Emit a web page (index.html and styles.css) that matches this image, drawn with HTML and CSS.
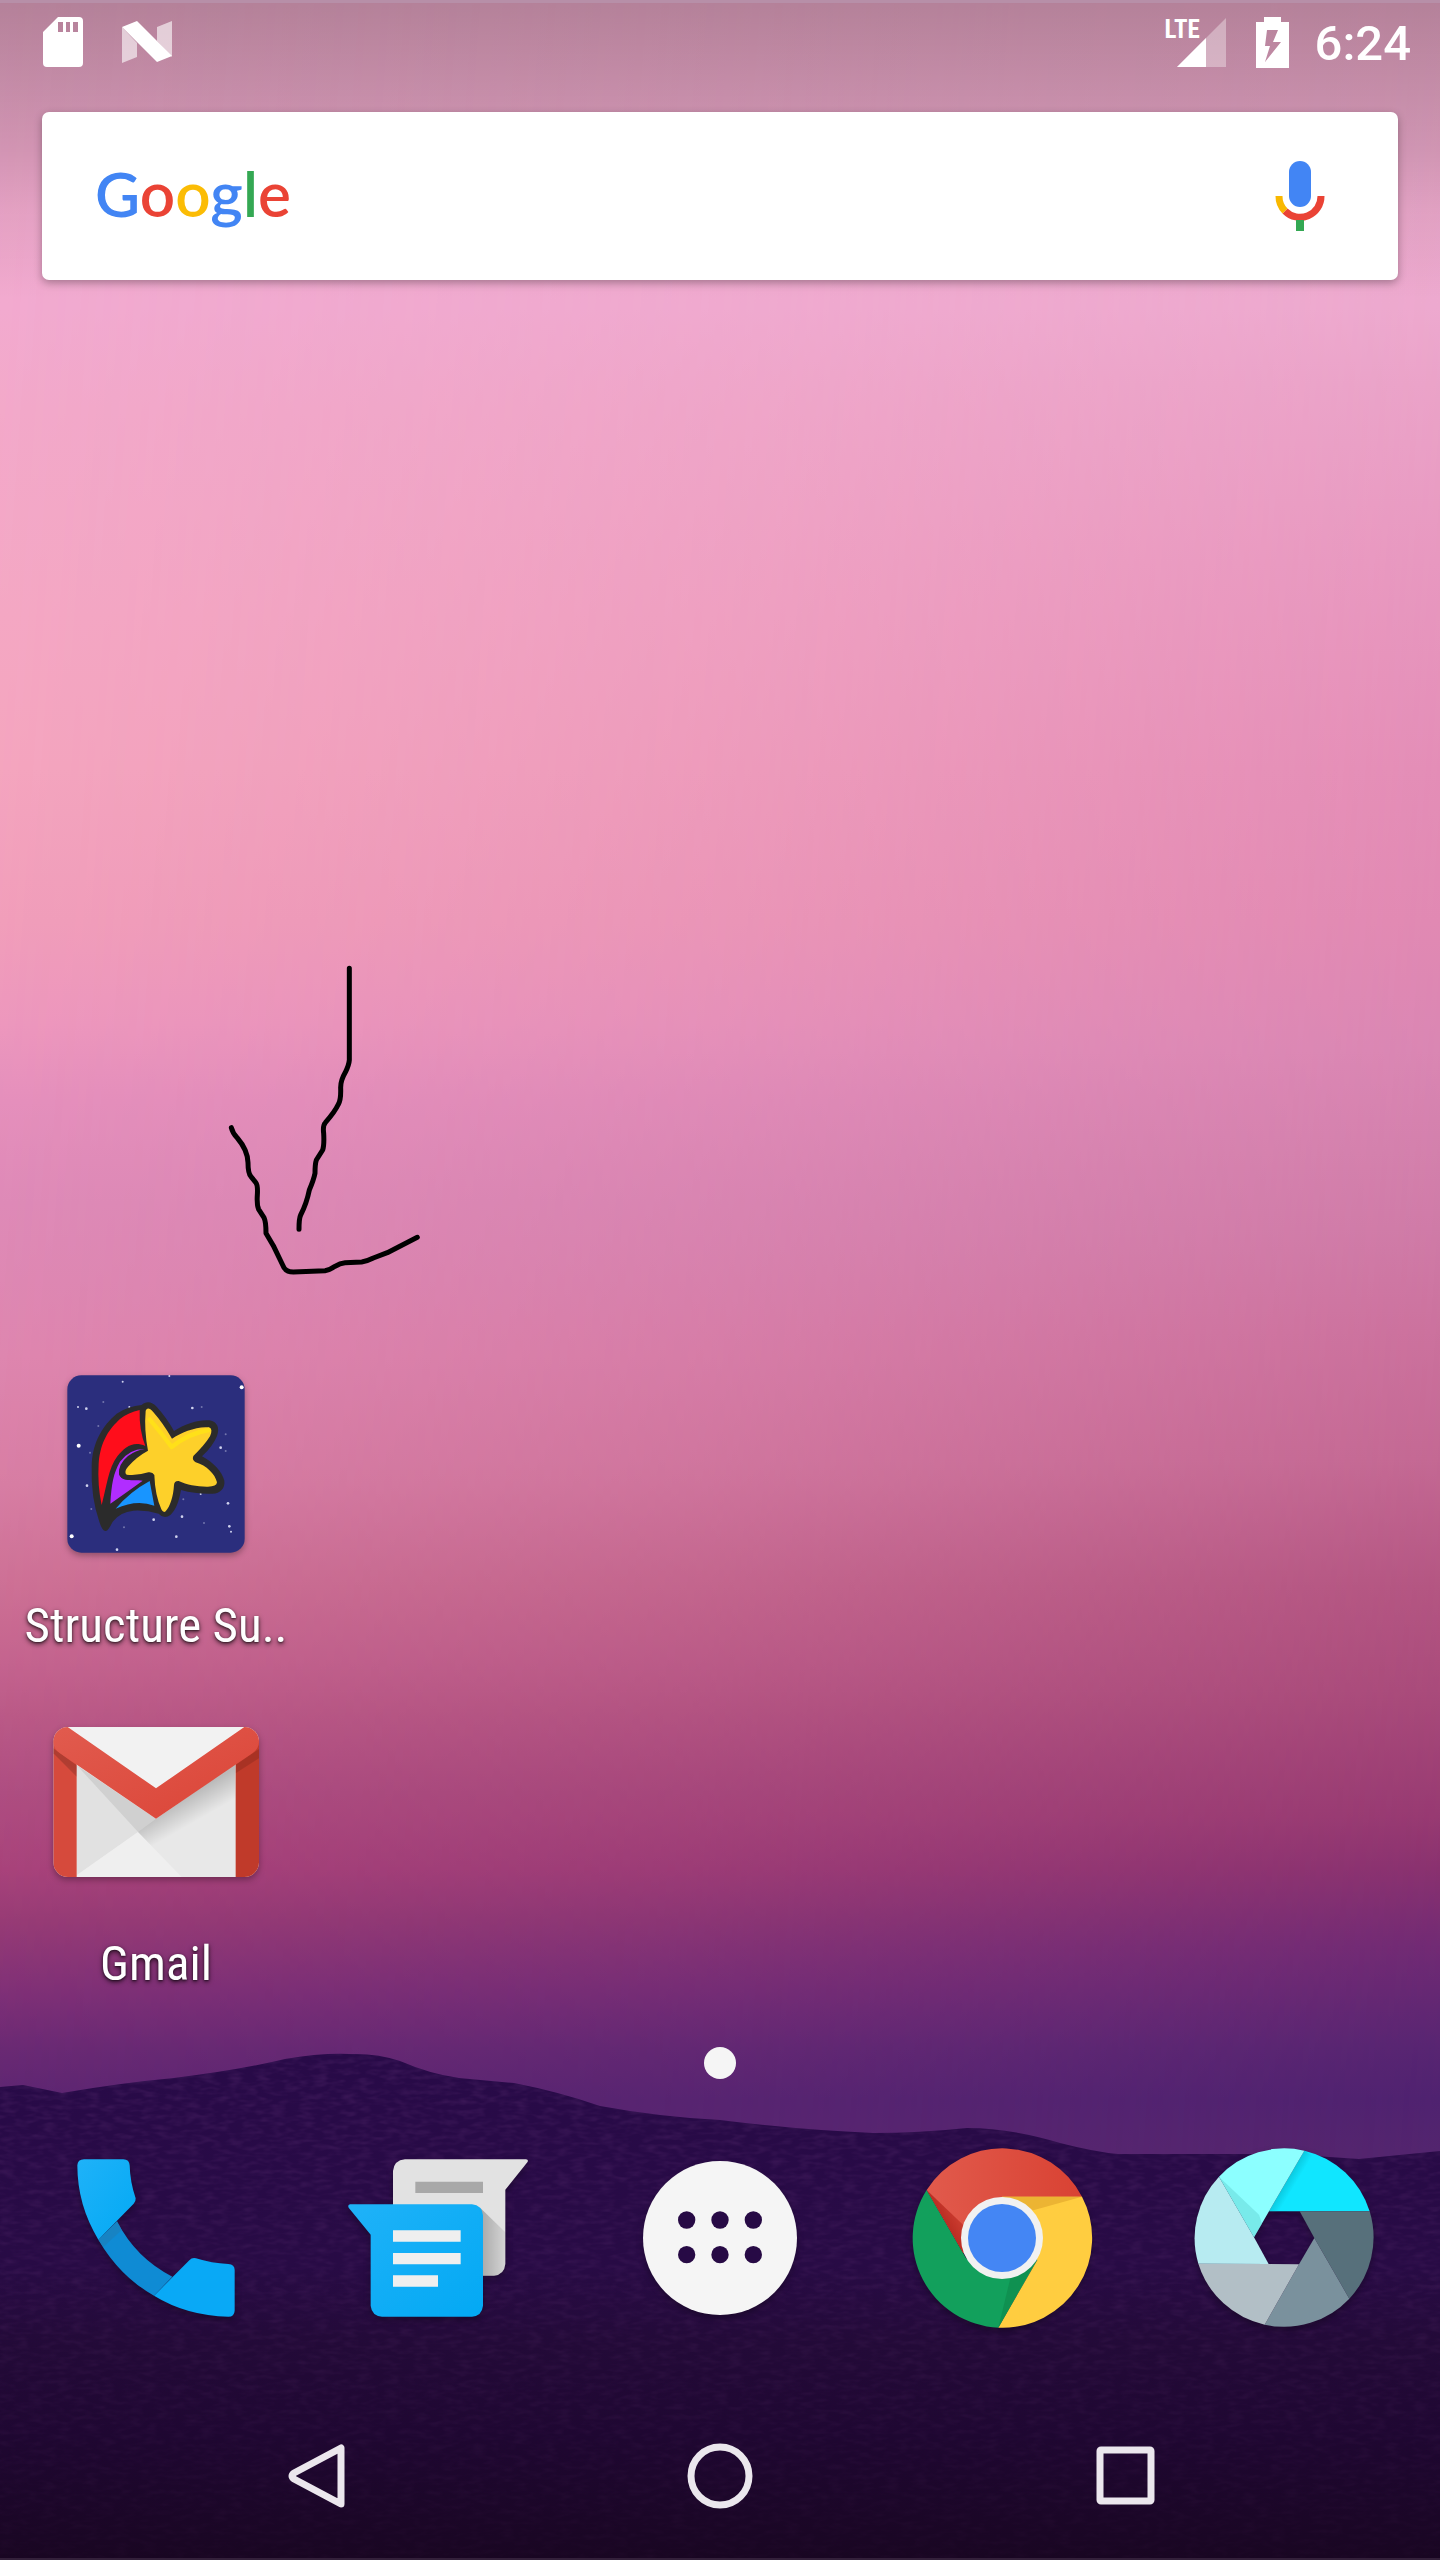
FILE: index.html
```html
<!DOCTYPE html>
<html lang="en">
<head>
<meta charset="utf-8">
<meta name="viewport" content="width=device-width, initial-scale=1">
<title>Home screen</title>
<link rel="stylesheet" href="styles.css">
</head>
<body>
<main class="screen">
  <div class="sky"></div>
  <div class="sky sky-right"></div>
  <svg class="hills" viewBox="0 0 1440 2560" preserveAspectRatio="none" aria-hidden="true">
    <defs>
      <linearGradient id="hill" x1="0" y1="2050" x2="0" y2="2560" gradientUnits="userSpaceOnUse">
        <stop offset="0" stop-color="#280a48"/>
        <stop offset=".42" stop-color="#280b45"/>
        <stop offset=".58" stop-color="#230a38"/>
        <stop offset=".75" stop-color="#1f0732"/>
        <stop offset="1" stop-color="#190622"/>
      </linearGradient>
      <filter id="grain" x="0" y="0" width="100%" height="100%">
        <feTurbulence type="fractalNoise" baseFrequency=".07 .2" numOctaves="2" seed="4"/>
        <feColorMatrix values="0 0 0 0 .38  0 0 0 0 .12  0 0 0 0 .42  1.6 0 0 0 -.65"/>
        <feComposite in2="SourceGraphic" operator="in"/>
      </filter>
      <linearGradient id="fade" x1="0" y1="2050" x2="0" y2="2560" gradientUnits="userSpaceOnUse">
        <stop offset="0" stop-color="#fff"/>
        <stop offset="1" stop-color="#fff" stop-opacity=".2"/>
      </linearGradient>
      <path id="ridge" d="M0 2087L23 2085L62 2093Q120 2083 174 2078Q240 2070 285 2059Q320 2053 349 2054Q377 2053 400 2061Q430 2074 459 2078L514 2083Q560 2092 600 2106Q660 2117 720 2120Q800 2130 873 2133Q920 2133 967 2128Q1010 2128 1060 2143Q1095 2152 1118 2154H1240Q1300 2154 1359 2159L1440 2151V2560H0Z"/>
    </defs>
    <use href="#ridge" fill="url(#hill)"/>
    <use href="#ridge" fill="url(#fade)" filter="url(#grain)" opacity=".2"/>
    <path fill="#33203a" d="M0 2558H1440V2560H0Z"/>
  </svg>
  <div class="scrim"></div>

  <header class="status">
    <div class="status-group notices">
      <svg class="sd" viewBox="0 0 40 50" role="img" aria-label="SD card"><path fill="#fff" fill-rule="evenodd" d="M15 0H36Q40 0 40 4V46Q40 50 36 50H4Q0 50 0 46V15ZM15 5V15H20V5ZM23 5V15H27V5ZM30 5V15H35V5Z"/></svg>
      <svg class="nougat" viewBox="0 0 50 42" role="img" aria-label="Android update"><path fill="#fff" opacity=".6" d="M0 6L15 22V36L0 42ZM35 6L50 0V36L35 20Z"/><path fill="#fff" d="M0 6L15 0L50 35L35 41Z"/></svg>
    </div>
    <div class="status-group system">
      <div class="signal">
        <span class="lte">LTE</span>
        <svg class="bars" viewBox="0 0 49 49" role="img" aria-label="Signal strength"><path fill="#fff" opacity=".35" d="M0 49L49 0V49Z"/><path fill="#fff" d="M0 49L29 20V49Z"/></svg>
      </div>
      <svg class="battery" viewBox="0 0 33 51" role="img" aria-label="Battery charging"><path fill="#fff" fill-rule="evenodd" d="M8 0H25V5H33V51H0V5H8ZM11 13L9 29H14L9 45L25 25H17L22 13Z"/></svg>
      <time class="clock">6:24</time>
    </div>
  </header>

  <form class="search">
    <label class="logo" for="q"><span class="b">G</span><span class="r">o</span><span class="y">o</span><span class="b">g</span><span class="g">l</span><span class="r">e</span></label>
    <input class="query" id="q" type="text">
    <button class="mic" type="button" aria-label="Voice search">
      <svg viewBox="0 0 50 70" aria-hidden="true"><rect x="14" y="0" width="22" height="46" rx="11" fill="#4285f4"/><path fill="none" stroke="#ea4335" stroke-width="7" d="M10 50A21 21 0 0 0 46 35"/><path fill="none" stroke="#f9b800" stroke-width="7" d="M4 35A21 21 0 0 0 10 50"/><path fill="#34a853" d="M21 59H29V70H21Z"/></svg>
    </button>
  </form>

  <section class="apps">
    <a class="app" href="#structure">
      <svg class="icon" viewBox="156 30 624 624" aria-hidden="true">
        <rect x="202" y="76" width="532" height="532" rx="42" fill="#2b2e7d"/>
        <g fill="#cfd2ee"><circle cx="725" cy="112" r="6" fill="#fff"/><circle cx="236" cy="287" r="6" fill="#fff"/><circle cx="215" cy="559" r="6" fill="#fff"/><circle cx="368" cy="95" r="3"/><circle cx="508" cy="78" r="3"/><circle cx="259" cy="176" r="4"/><circle cx="234" cy="171" r="3"/><circle cx="388" cy="171" r="3"/><circle cx="577" cy="174" r="4"/><circle cx="662" cy="293" r="4"/><circle cx="261" cy="407" r="4"/><circle cx="684" cy="460" r="4"/><circle cx="546" cy="500" r="4"/><circle cx="461" cy="509" r="4"/><circle cx="529" cy="560" r="4"/><circle cx="688" cy="529" r="4"/><circle cx="693" cy="545" r="3"/><circle cx="351" cy="599" r="4"/><circle cx="602" cy="432" r="3"/></g>
        <g fill="#7275ac"><circle cx="310" cy="156" r="3"/><circle cx="605" cy="171" r="3"/><circle cx="677" cy="253" r="3"/><circle cx="677" cy="303" r="3"/><circle cx="295" cy="228" r="3"/><circle cx="270" cy="308" r="3"/><circle cx="274" cy="477" r="3"/><circle cx="372" cy="532" r="3"/><circle cx="612" cy="519" r="3"/><circle cx="550" cy="448" r="3"/></g>
        <path fill="#2b2b2b" d="M425 165C438 152 456 154 470 170Q500 203 522 243C560 218 600 208 628 211C652 214 660 235 651 258Q638 290 606 319C640 337 666 365 673 392C676 415 660 430 638 431Q590 433 543 420C537 455 527 480 512 494Q493 510 476 491Q440 480 400 482Q360 486 338 515Q325 542 317 543Q306 542 298 515Q272 440 275 350C276 275 310 225 350 191Q385 168 425 165Z"/>
        <path fill="#ff0d1b" d="M419 180Q417 240 436 288C400 272 375 290 352 319C325 355 320 410 305 465Q292 405 296 340C302 270 330 235 360 207Q385 187 419 180Z"/>
        <path fill="#b12dff" d="M436 297Q408 300 384 318Q355 342 357 372C366 397 395 388 428 392Q395 416 331 461C335 400 340 370 360 335Q390 295 436 297Z"/>
        <path fill="none" stroke="#2b2b2b" stroke-width="14" stroke-linecap="round" d="M436 304Q400 318 380 340Q355 365 369 378Q385 388 455 374"/>
        <path fill="#1895ff" d="M449 393L463 467Q410 447 347 476Q390 425 449 393Z"/>
        <path fill="#fdd02a" d="M437 182Q443 167 459 185Q490 220 516 266C545 247 590 228 627 232Q640 237 630 259Q614 285 580 318Q575 330 587 337C620 347 645 372 651 397Q650 411 620 410C590 410 560 404 536 393Q523 392 522 405C520 440 510 470 497 484Q490 490 484 478Q465 435 463 375Q458 365 445 367Q410 378 380 374Q370 366 384 350Q410 320 444 302Q432 240 437 182Z"/>
        <path fill="none" stroke="#ffe019" stroke-width="13" stroke-linejoin="round" stroke-linecap="round" d="M449 208Q485 250 515 291Q565 250 626 240"/>
      </svg>
      <span class="label">Structure Su..</span>
    </a>
    <a class="app" href="#gmail">
      <svg class="icon" viewBox="156 24 624 624" aria-hidden="true">
        <defs>
          <clipPath id="env"><rect x="160" y="111" width="617" height="450" rx="44"/></clipPath>
          <linearGradient id="fold" x1="0" y1="0" x2="1" y2="1"><stop offset="0" stop-color="#e15b4e"/><stop offset="1" stop-color="#db4437"/></linearGradient>
          <linearGradient id="under" x1="340" y1="300" x2="300" y2="370" gradientUnits="userSpaceOnUse"><stop offset="0" stop-color="#000" stop-opacity=".18"/><stop offset="1" stop-color="#000" stop-opacity="0"/></linearGradient>
          <linearGradient id="under2" x1="590" y1="300" x2="630" y2="370" gradientUnits="userSpaceOnUse"><stop offset="0" stop-color="#000" stop-opacity=".2"/><stop offset="1" stop-color="#000" stop-opacity="0"/></linearGradient>
        </defs>
        <g clip-path="url(#env)">
          <rect x="160" y="111" width="617" height="450" fill="#e8e8e8"/>
          <path fill="#e1e1e1" d="M230 226L414 426L230 556Z"/>
          <path fill="#d0d0d0" d="M230 226L468 386L414 426Z"/>
          <path fill="#efefef" d="M414 426L545 561H230V556Z"/>
          <path fill="url(#under2)" d="M414 426L468 386L706 222V330L540 555Z"/>
          <path fill="#d64a3c" d="M160 150L230 200V561H160Z"/>
          <path fill="#c03a2a" d="M777 150L707 200V561H777Z"/>
          <path fill="url(#under)" d="M160 175L230 226V260L160 190Z"/>
          <path fill="#000" opacity=".12" d="M777 177L707 224V250L777 205Z"/>
          <path fill="#f2f2f2" d="M200 111H736L468 295Z"/>
          <path fill="url(#fold)" d="M203 111L468 295L733 111H777V155Q777 175 757 190L468 386L180 190Q160 175 160 155V111Z"/>
        </g>
      </svg>
      <span class="label">Gmail</span>
    </a>
  </section>

  <div class="pages"><span class="dot"></span></div>

  <nav class="dock" aria-label="Favourites">
    <a class="dock-item" href="#phone" aria-label="Phone">
      <svg class="icon" viewBox="36 42 624 624" aria-hidden="true">
        <defs><linearGradient id="blue" x1="0" y1="0" x2="1" y2="1"><stop offset="0" stop-color="#1fb2f8"/><stop offset="1" stop-color="#03a9f4"/></linearGradient></defs>
        <path fill="#0f8bd4" d="M231 304Q288 415 397 470L342 527Q240 470 175 359Z"/>
        <path fill="#1c7fb8" opacity=".6" d="M231 304L245 330L190 381L175 359Z"/>
        <path fill="url(#blue)" d="M132 118H250Q268 118 269 136Q270 185 287 235Q288 243 281 251L175 359Q112 255 112 136Q113 118 132 118Z"/>
        <path fill="#09a9f6" d="M342 527L448 421Q456 412 468 415Q515 430 565 432Q584 433 584 450V572Q583 590 565 590Q440 587 342 527Z"/>
      </svg>
    </a>
    <a class="dock-item" href="#messages" aria-label="Messages">
      <svg class="icon" viewBox="882 42 624 624" aria-hidden="true">
        <defs><linearGradient id="cast" x1="1325" y1="0" x2="1396" y2="0" gradientUnits="userSpaceOnUse"><stop offset="0" stop-color="#000" stop-opacity=".25"/><stop offset="1" stop-color="#000" stop-opacity=".06"/></linearGradient></defs>
        <path fill="#e2e2e2" d="M1095 118H1458Q1467 119 1462 127L1396 209V432Q1393 464 1362 467H1059V153Q1062 121 1095 118Z"/>
        <path fill="#a8a8a8" d="M1126 185H1329V219H1126Z"/>
        <path fill="url(#cast)" d="M1322 265L1396 337V432Q1393 464 1362 467H1322Z"/>
        <path fill="url(#blue)" d="M930 253H1296Q1326 256 1329 286V557Q1326 587 1296 590H1026Q995 587 992 557V344L926 263Q922 255 930 253Z"/>
        <path fill="#efefef" d="M1059 331H1262V365H1059ZM1059 399H1262V433H1059ZM1059 466H1194V500H1059Z"/>
      </svg>
    </a>
    <a class="dock-item" href="#all" aria-label="All apps">
      <svg class="icon" viewBox="48 342 624 624" aria-hidden="true"><circle cx="360" cy="654" r="231" fill="#f5f5f5"/><g fill="#270a45"><circle cx="260" cy="600" r="26"/><circle cx="360" cy="600" r="26"/><circle cx="460" cy="600" r="26"/><circle cx="260" cy="704" r="26"/><circle cx="360" cy="704" r="26"/><circle cx="460" cy="704" r="26"/></g></svg>
    </a>
    <a class="dock-item" href="#chrome" aria-label="Chrome">
      <svg class="icon" viewBox="894 342 624 624" aria-hidden="true">
        <defs>
          <linearGradient id="red" x1="0" y1="0" x2="1" y2="0"><stop offset="0" stop-color="#e15a4c"/><stop offset="1" stop-color="#d94233"/></linearGradient>
          <linearGradient id="redshade" x1="1030" y1="605" x2="1080" y2="575" gradientUnits="userSpaceOnUse"><stop offset="0" stop-color="#b92c22"/><stop offset="1" stop-color="#d04033"/></linearGradient>
        </defs>
        <path fill="url(#red)" d="M980 510A269 269 0 0 1 1446 530L1206 654L1090 700Z"/>
        <path fill="#12a05c" d="M980 510L1099 716L1206 654L1312 720L1195 923A269 269 0 0 1 980 510Z"/>
        <path fill="#ffcd40" d="M1206 530H1446A269 269 0 0 1 1195 923L1312 720L1206 654Z"/>
        <path fill="url(#redshade)" d="M980 510L1090 615L1090 700Z"/>
        <path fill="#ecb433" d="M1206 530H1446L1300 571Z"/>
        <path fill="#0f9151" d="M1312 715L1195 923L1232 770Z"/>
        <circle cx="1206" cy="654" r="123" fill="#f1f1f1"/><circle cx="1206" cy="654" r="102" fill="#4486f4"/>
      </svg>
    </a>
    <a class="dock-item" href="#camera" aria-label="Camera">
      <svg class="icon" viewBox="90 42 624 624" aria-hidden="true">
        <defs>
          <linearGradient id="edge" x1="402" y1="182" x2="432" y2="200" gradientUnits="userSpaceOnUse"><stop offset="0" stop-color="#0097a7" stop-opacity=".45"/><stop offset="1" stop-color="#0097a7" stop-opacity="0"/></linearGradient>
        </defs>
        <path fill="#10e6ff" d="M357 274L463 92A269 269 0 0 1 659 274Z"/>
        <path fill="url(#edge)" d="M357 274L463 92L510 120L420 274Z"/>
        <path fill="#57707b" d="M449 274H659A269 269 0 0 1 598 536L493 354Z"/>
        <path fill="#7a919d" d="M493 354L598 536A269 269 0 0 1 344 614L447 433Z"/>
        <path fill="#b2bfc6" d="M447 433L344 614A269 269 0 0 1 145 431L356 432Z"/>
        <path fill="#b7ebf1" d="M356 432L145 431A269 269 0 0 1 207 170L312 352Z"/>
        <path fill="#8cffff" d="M312 352L207 170A269 269 0 0 1 463 92L357 274Z"/>
        <path fill="#5fd0d0" opacity=".45" d="M312 352L207 170L327 284L336 311Z"/>
      </svg>
    </a>
  </nav>

  <nav class="softkeys" aria-label="System">
    <button class="key" type="button" aria-label="Back"><svg viewBox="0 0 66 66" aria-hidden="true"><path d="M59 5V61L12 36Q8 33 12 30Z"/></svg></button>
    <button class="key" type="button" aria-label="Home"><svg viewBox="0 0 66 66" aria-hidden="true"><circle cx="33" cy="33" r="29"/></svg></button>
    <button class="key" type="button" aria-label="Recent apps"><svg viewBox="0 0 66 66" aria-hidden="true"><rect x="8" y="7" width="51" height="51" rx="1"/></svg></button>
  </nav>

  <svg class="sketch" viewBox="0 0 780 1080" aria-hidden="true">
    <path d="M448 85V360Q447 375 436 397Q421 423 422 445Q423 480 415 493Q405 515 376 548Q368 556 371 580Q373 615 368 630L349 660Q345 672 345 700Q341 720 328 750Q320 790 302 825Q297 835 297 868"/>
    <path d="M94 563Q98 580 112 594Q143 630 144 668Q144 700 153 710L167 727Q174 735 172 765Q170 795 176 808L192 833Q198 845 198 880L220 917L248 975Q255 996 280 996L375 992Q390 990 405 979Q420 969 435 968L485 966Q500 964 520 954L562 938L652 892"/>
  </svg>
</main>
</body>
</html>
```
FILE: styles.css
```css
* { box-sizing: border-box; }

body {
  margin: 0;
  font-family: Roboto, "Liberation Sans", sans-serif;
  color: #fff;
}

.screen {
  position: relative;
  display: flex;
  flex-direction: column;
  min-height: 100vh;
  overflow: hidden;
  isolation: isolate;
}

/* Wallpaper: two vertical colour ramps blended from left to right */
.sky,
.hills,
.scrim {
  position: absolute;
  inset: 0;
  width: 100%;
  height: 100%;
  z-index: -1;
}

.sky {
  background: linear-gradient(180deg,
    #f0accc 0%, #f2aad0 12%, #f3a9ca 16%, #f5a8c4 24%, #f5a6bf 30%,
    #f29fbb 36%, #ee98be 40%, #e690bd 43%, #df8bb8 47%, #e087b0 53%,
    #d97fa5 58%, #cf7296 62%, #c66590 65%, #bc5b88 67%, #b04f82 70%,
    #ab447c 73%, #9a3d76 75%, #803077 78%, #6c2a74 80%, #5e2672 82%);
}

.sky-right {
  background: linear-gradient(180deg,
    #f0accc 0%, #eca9ce 12%, #e9a2c8 15%, #e696bf 22%, #e28bb6 30%,
    #df87b2 36%, #d885b2 41%, #d27fab 45%, #ce7aa6 48%, #ca709c 52%,
    #c26792 57%, #b25481 62%, #a84a7a 66%, #963971 71%, #88316f 73%,
    #702a74 76%, #572572 80%, #4f2270 82%, #53256e 84%);
  mask-image: linear-gradient(94deg, transparent, rgba(0, 0, 0, .42) 50%, #000);
}

.scrim {
  height: 300px;
  background:
    linear-gradient(180deg, #b78fa8 3px, transparent 3px),
    linear-gradient(180deg,
      rgba(0, 0, 0, .25) 0%, rgba(0, 0, 0, .17) 34%,
      rgba(0, 0, 0, .13) 50%, rgba(0, 0, 0, .06) 70%, rgba(0, 0, 0, 0) 100%);
}

/* Status bar */
.status {
  display: flex;
  justify-content: space-between;
  height: 84px;
  padding: 0 29px 0 43px;
}

.status-group {
  display: flex;
  align-items: center;
}

.notices { gap: 39px; }
.system { gap: 26px; }

.sd { width: 40px; height: 50px; }
.nougat { width: 50px; height: 42px; }
.battery { width: 33px; height: 51px; }

.signal {
  display: flex;
  align-items: flex-start;
  margin-right: 4px;
}

.lte {
  width: 12px;
  font-family: "Roboto Condensed", "Liberation Sans Narrow", Roboto, sans-serif;
  font-size: 25px;
  font-weight: 700;
  line-height: 24px;
  white-space: nowrap;
}

.bars { width: 49px; height: 49px; }

.clock {
  font-size: 49px;
  font-weight: 500;
  line-height: 56px;
  padding-top: 3px;
}

/* Search card */
.search {
  display: flex;
  align-items: center;
  height: 168px;
  margin: 28px 42px 0;
  padding: 0 73px 0 53px;
  background: #fff;
  border-radius: 7px;
  box-shadow: 0 3px 8px rgba(0, 0, 0, .3);
}

.logo {
  padding-bottom: 6px;
  font-family: Lato, "Liberation Sans", sans-serif;
  font-size: 62px;
  font-weight: 600;
  line-height: 80px;
}

.b { color: #4285f4; }
.r { color: #ea4335; }
.y { color: #fbbc05; }
.g { color: #34a853; }

.query {
  flex: 1;
  min-width: 0;
  height: 100%;
  padding: 0 24px;
  border: 0;
  outline: 0;
  background: transparent;
  font: inherit;
  font-size: 48px;
}

.mic {
  display: flex;
  padding: 0;
  border: 0;
  background: none;
}

.mic svg { width: 50px; height: 70px; }

/* App shortcuts */
.apps {
  display: grid;
  grid-template-columns: repeat(5, 1fr);
  gap: 44px 0;
  margin-top: auto;
  padding: 0 15px;
}

.app {
  grid-column: 1;
  display: flex;
  flex-direction: column;
  align-items: center;
  gap: 30px;
  color: inherit;
  text-decoration: none;
}

.icon {
  display: block;
  width: 208px;
  height: 208px;
  filter: drop-shadow(0 3px 3px rgba(0, 0, 0, .3));
}

.label {
  font-family: "Roboto Condensed", "Liberation Sans Narrow", Roboto, sans-serif;
  font-size: 49px;
  line-height: 56px;
  white-space: nowrap;
  text-shadow: 0 2px 5px rgba(0, 0, 0, .7), 0 1px 2px rgba(0, 0, 0, .5);
}

.pages {
  display: flex;
  align-items: center;
  justify-content: center;
  height: 42px;
  margin-top: 50px;
}

.dot {
  width: 32px;
  height: 32px;
  border-radius: 50%;
  background: #f5f5f5;
}

.dock {
  display: grid;
  grid-template-columns: repeat(5, 1fr);
  place-items: center;
  height: 308px;
  padding: 0 15px;
}

/* System navigation keys */
.softkeys {
  display: grid;
  grid-template-columns: repeat(3, 1fr);
  place-items: center;
  height: 168px;
  padding: 0 112px;
}

.key {
  display: flex;
  padding: 0;
  border: 0;
  background: none;
}

.key svg {
  width: 66px;
  height: 66px;
  fill: none;
  stroke: #ebe7ed;
  stroke-width: 7px;
  stroke-linejoin: round;
}

/* Freehand arrow drawn over the workspace */
.sketch {
  position: absolute;
  left: 200px;
  top: 940px;
  width: 260px;
  height: 360px;
  fill: none;
  stroke: #000;
  stroke-width: 15px;
  stroke-linecap: round;
  stroke-linejoin: round;
}
```
